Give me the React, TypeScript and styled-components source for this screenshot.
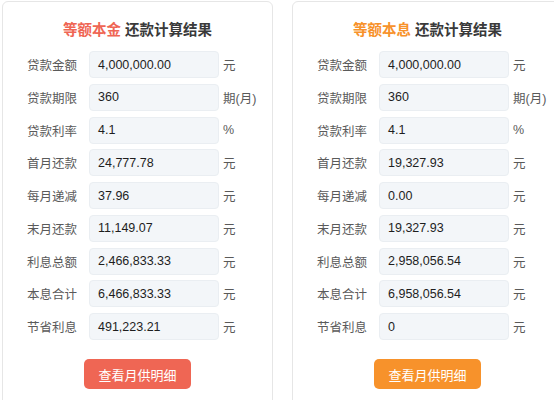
import React from "react";
import styled, { createGlobalStyle } from "styled-components";

const GlobalStyle = createGlobalStyle`
  html, body {
    margin: 0;
    padding: 0;
    background: #ffffff;
    overflow: hidden;
  }
  body {
    font-family: "Liberation Sans", "Noto Sans CJK SC", sans-serif;
  }
`;

// two result cards side by side; the second one runs off the right edge
const Page = styled.div`
  display: flex;
  align-items: flex-start;
  gap: 19px;
  padding: 1px 0 0 2px;
  width: 554px;
  height: 399px;
  overflow: hidden;
`;

const Card = styled.div`
  flex: 0 0 271px;
  box-sizing: border-box;
  border: 1px solid #e6e6e6;
  border-radius: 6px;
  background: #fff;
  padding: 19px 0 40px 24px;
`;

const Title = styled.div`
  text-align: center;
  font-size: 14.5px;
  font-weight: bold;
  color: #3a3a3a;
  line-height: 18px;
  margin: 0 0 12px -24px;
`;

const Accent = styled.span<{ $color: string }>`
  color: ${(p) => p.$color};
`;

const Rows = styled.div`
  display: flex;
  flex-direction: column;
  gap: 5.75px;
`;

const Row = styled.div`
  display: flex;
  align-items: center;
`;

const Label = styled.div`
  width: 62px;
  font-size: 12.5px;
  color: #5a5a5a;
`;

const Field = styled.div`
  box-sizing: border-box;
  width: 130px;
  height: 27px;
  display: flex;
  align-items: center;
  padding-left: 8px;
  background: #f3f6f9;
  border: 1px solid #eaeef2;
  border-radius: 4px;
  font-size: 12.5px;
  color: #1e1e1e;
`;

const Unit = styled.div`
  margin-left: 4px;
  font-size: 12.5px;
  color: #5a5a5a;
`;

const ButtonRow = styled.div`
  display: flex;
  justify-content: center;
  margin: 19px 0 0 -24px;
`;

const DetailButton = styled.button<{ $bg: string }>`
  width: 107px;
  height: 30px;
  border: none;
  border-radius: 5px;
  background: ${(p) => p.$bg};
  color: #fff;
  font-family: "Noto Sans CJK SC", sans-serif;
  font-size: 13px;
  cursor: pointer;
`;

type Item = [string, string, string];

const principal: Item[] = [
  ["贷款金额", "4,000,000.00", "元"],
  ["贷款期限", "360", "期(月)"],
  ["贷款利率", "4.1", "%"],
  ["首月还款", "24,777.78", "元"],
  ["每月递减", "37.96", "元"],
  ["末月还款", "11,149.07", "元"],
  ["利息总额", "2,466,833.33", "元"],
  ["本息合计", "6,466,833.33", "元"],
  ["节省利息", "491,223.21", "元"],
];

const annuity: Item[] = [
  ["贷款金额", "4,000,000.00", "元"],
  ["贷款期限", "360", "期(月)"],
  ["贷款利率", "4.1", "%"],
  ["首月还款", "19,327.93", "元"],
  ["每月递减", "0.00", "元"],
  ["末月还款", "19,327.93", "元"],
  ["利息总额", "2,958,056.54", "元"],
  ["本息合计", "6,958,056.54", "元"],
  ["节省利息", "0", "元"],
];

const ResultCard = ({
  method,
  color,
  items,
}: {
  method: string;
  color: string;
  items: Item[];
}) => (
  <Card>
    <Title>
      <Accent $color={color}>{method}</Accent> 还款计算结果
    </Title>
    <Rows>
      {items.map(([label, value, unit]) => (
        <Row key={label}>
          <Label>{label}</Label>
          <Field>{value}</Field>
          <Unit>{unit}</Unit>
        </Row>
      ))}
    </Rows>
    <ButtonRow>
      <DetailButton $bg={color}>查看月供明细</DetailButton>
    </ButtonRow>
  </Card>
);

export default function App() {
  return (
    <>
      <GlobalStyle />
      <Page>
        <ResultCard method="等额本金" color="#ef6654" items={principal} />
        <ResultCard method="等额本息" color="#f7922b" items={annuity} />
      </Page>
    </>
  );
}
